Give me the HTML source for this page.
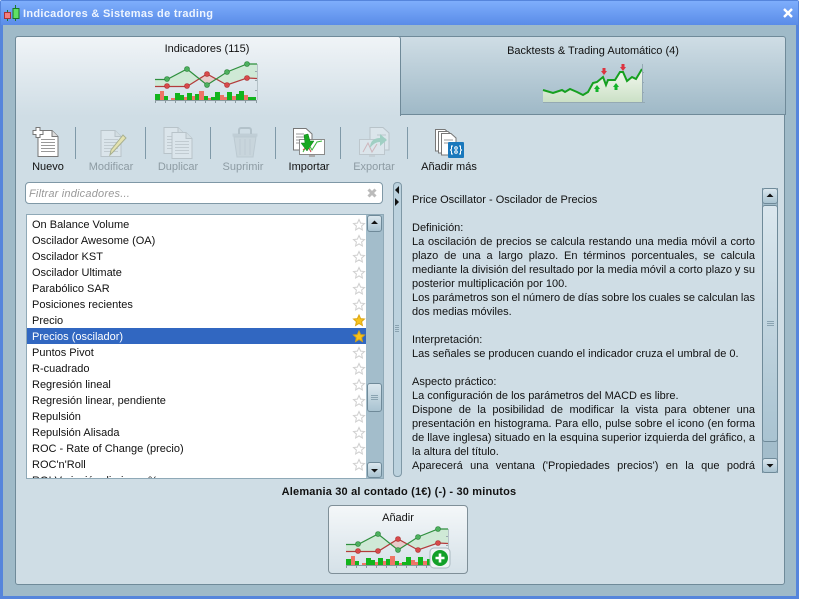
<!DOCTYPE html>
<html><head><meta charset="utf-8"><style>
html,body{margin:0;padding:0;width:819px;height:600px;overflow:hidden;background:#fff}
body{font-family:"Liberation Sans",sans-serif;font-size:11px;color:#111;position:relative}
.a{position:absolute}
.t{position:absolute;white-space:nowrap;line-height:14px;margin-top:1px}
.c{transform:translateX(-50%)}
.dis{color:#8d9ba3}
.sep{position:absolute;top:127px;width:1px;height:32px;background:#7f99a8}
.row{position:absolute;left:5px;width:320px;height:16px;line-height:16px;white-space:nowrap;color:#111;margin-top:1px}
.l{position:absolute;left:412px;width:343px;height:14px;line-height:14px;white-space:nowrap;color:#111;margin-top:1px}
.j{text-align:justify;text-align-last:justify;white-space:normal;word-spacing:-1.2px}
.sb{position:absolute;border:1px solid #6f8a99;border-radius:3px;box-sizing:border-box;background:linear-gradient(#dbe7ee,#a9c3d1)}
svg{position:absolute;overflow:visible}
</style></head><body>
<div class="a" style="left:0;top:0;width:799px;height:599px;background:#5585dc;border-radius:2px 2px 0 0"></div>
<div class="a" style="left:1px;top:1px;width:797px;height:24px;background:linear-gradient(#7eaefc,#5a8ce8)"></div>
<div class="a" style="left:3px;top:25px;width:793px;height:571px;background:#9fbac8"></div>
<div class="a" style="left:15px;top:36px;width:770px;height:549px;box-sizing:border-box;border:1px solid #6f8a99;border-radius:3px;background:#cfdde5"></div>
<div class="a" style="left:401px;top:36px;width:385px;height:79px;box-sizing:border-box;border:1px solid #6f8a99;border-left:none;border-radius:0 3px 0 0;background:linear-gradient(#cfdde5,#9fb9c7)"></div>
<div class="a" style="left:15px;top:36px;width:386px;height:80px;box-sizing:border-box;border:1px solid #6f8a99;border-bottom:none;border-radius:3px 3px 0 0;background:linear-gradient(#f0f4f7,#cfdde5)"></div>

<svg style="left:0;top:0" width="24" height="24">
<path d="M7.500 10v11M15.500 5v16" stroke="#1c7a2a"/><rect x="4.500" y="12.500" width="6" height="6" fill="#f47f7f" stroke="#a33"/><rect x="13" y="8.500" width="6" height="10" fill="#5fe065" stroke="#197a24"/>
</svg>
<div class="t" style="left:23px;top:6px;color:#eef5ff;font-weight:bold;font-size:11px;letter-spacing:.3px">Indicadores &amp; Sistemas de trading</div>
<svg style="left:781px;top:6px" width="14" height="14"><path d="M3 3l8 8M11 3l-8 8" stroke="#fff" stroke-width="2.400"/></svg>

<div class="t c" style="left:207px;top:41px">Indicadores (115)</div>
<div class="t c" style="left:593px;top:43px">Backtests &amp; Trading Automático (4)</div>

<svg style="left:0;top:0" width="819" height="600">
<defs>
<g id="chart">
<path d="M155 79.500H167L187 69L207 85L227 72L247 64H257V78.500H247L227 85L207 74L187 86H167L155 86.500Z" fill="#cfe9d6"/>
<path d="M198 78L207 74L216 79L207 85Z" fill="#e8cccc"/>
<path d="M257.500 64V100" stroke="#b5c2c8"/>
<path d="M257 71.500h-2M257 80.500h-2M257 90.500h-2" stroke="#9aa8ae"/>
<path d="M155 86.500H167H187L207 74L227 85L247 78L257 78.500" fill="none" stroke="#b33c3c" stroke-width="1.200"/>
<path d="M155 79.500H167L187 69L207 85L227 72L247 64H257" fill="none" stroke="#2f8f3e" stroke-width="1.200"/>
<g fill="#d8494a" stroke="#a33" stroke-width=".6"><circle cx="167" cy="86" r="2.500"/><circle cx="187" cy="86" r="2.500"/><circle cx="207" cy="74" r="2.500"/><circle cx="227" cy="85" r="2.500"/><circle cx="247" cy="78" r="2.500"/></g>
<g fill="#4cb05e" stroke="#2a8039" stroke-width=".6"><circle cx="167" cy="79" r="2.500"/><circle cx="187" cy="69" r="2.500"/><circle cx="207" cy="85" r="2.500"/><circle cx="227" cy="72" r="2.500"/><circle cx="247" cy="64" r="2.500"/></g>
<g fill="#12b41c"><rect x="155" y="94" width="5" height="6"/><rect x="164" y="96" width="4" height="4"/><rect x="175" y="93" width="5" height="7"/><rect x="180" y="95" width="4" height="5"/><rect x="187" y="93" width="5" height="7"/><rect x="195" y="94" width="4" height="6"/><rect x="204" y="96" width="4" height="4"/><rect x="211" y="97" width="4" height="3"/><rect x="215" y="92" width="5" height="8"/><rect x="227" y="92" width="5" height="8"/><rect x="236" y="94" width="4" height="6"/><rect x="239" y="91" width="5" height="9"/><rect x="248" y="97" width="8" height="3"/></g>
<g fill="#ef7466"><rect x="160" y="91" width="4" height="9"/><rect x="171" y="98" width="4" height="2"/><rect x="184" y="97" width="3" height="3"/><rect x="192" y="96" width="3" height="4"/><rect x="199" y="91" width="5" height="9"/><rect x="208" y="98" width="3" height="2"/><rect x="220" y="95" width="4" height="5"/><rect x="224" y="97" width="3" height="3"/><rect x="232" y="96" width="4" height="4"/><rect x="244" y="95" width="4" height="5"/></g>
<path d="M155 100.500H257M155.500 100v3M165.500 100v3M175.500 100v3M185.500 100v3M195.500 100v3M205.500 100v3M215.500 100v3M225.500 100v3M235.500 100v3M245.500 100v3M256.500 100v3" stroke="#8a9a9f" fill="none"/>
</g>
<linearGradient id="gf" x1="0" y1="0" x2="0" y2="1"><stop offset="0" stop-color="#f4f9f0"/><stop offset="1" stop-color="#cbe0c6"/></linearGradient>
<polygon id="star" points="0,-5.500 1.600,-1.900 5.500,-1.500 2.600,1.100 3.400,5 0,2.900 -3.400,5 -2.600,1.100 -5.500,-1.500 -1.600,-1.900"/>
<g id="doc"><path d="M0 0H14L20 6V26H0Z" fill="#fff" stroke="#777"/><path d="M14 0V6H20" fill="#ddd" stroke="#777"/><path d="M3 9H17M3 12H17M3 15H17M3 18H17M3 21H17" stroke="#999"/></g>
</defs>
<use href="#chart"/>
<path d="M543 90L553 93L562 90L565 92L570 89L577 92L583 95L588 92L593 83L597 82L603 77L606 85L608 80L615 80L620 72L623 72L627 81L632 77L636 79L642 69V102H543Z" fill="url(#gf)"/>
<path d="M543 90L553 93L562 90L565 92L570 89L577 92L583 95L588 92L593 83L597 82L603 77L606 85L608 80L615 80L620 72L623 72L627 81L632 77L636 79L642 69" fill="none" stroke="#16a020" stroke-width="2"/>
<path d="M642.500 64V102M642 72.500h2M642 82.500h2M642 92.500h2M543 102.500H645" stroke="#94a9b3" fill="none"/>
<path d="M602.500 68h3v3h1.500l-3 4l-3-4h1.500ZM621.500 64h3v3h1.500l-3 4l-3-4h1.500Z" fill="#dc3340"/>
<path d="M597 85l3 4h-1.500v3h-3v-3h-1.500ZM616 83l3 4h-1.500v3h-3v-3h-1.500Z" fill="#12b42a"/>

<!-- toolbar -->
<use href="#doc" x="38" y="130.500"/>
<path d="M36 127.500h4v3h3v4h-3v3h-4v-3h-3v-4h3Z" fill="#fff" stroke="#777"/>
<g opacity=".25"><use href="#doc" x="101" y="130.500"/></g>
<path d="M113 152l-3 3l1-5l12-15l3 3Z" fill="#e4e2b0" stroke="#a8b090"/>
<g opacity=".25"><use href="#doc" x="164" y="127.500"/><use href="#doc" x="172" y="132.500"/></g>
<g opacity=".5"><path d="M234 137l3 20h16l3-20Z" fill="#c3cfd5" stroke="#aab8c0"/><path d="M232.500 135h25" stroke="#b2c0c8" stroke-width="3"/><path d="M239 134v-4a2 2 0 012-2h8a2 2 0 012 2v4" fill="none" stroke="#98a8b1" stroke-width="2"/><path d="M240 139v16M245 139v16M250 139v16" stroke="#aebcc4"/></g>
<path d="M293.500 128.500H306L312 134V150H293.500Z" fill="#fff" stroke="#777"/><path d="M296 134H304M296 137H306M296 140H306M296 143H306" stroke="#999"/>
<rect x="299.500" y="139.500" width="25" height="15" fill="#fff" stroke="#8a8a8a"/><path d="M309 155h6v2h-6Z" fill="#aaa"/><path d="M303 152l5-9l4 7l5-8l5-1" fill="none" stroke="#38b338"/><path d="M303 150l5-4l3 6" fill="none" stroke="#c44"/>
<path d="M304 135l4-1l2 7h4l-7 10l-6-8h4Z" fill="#18a820" stroke="#0d7c15" stroke-width=".5"/>
<g opacity=".25"><path d="M370 127.500H383L389 133V150H370Z" fill="#fff" stroke="#777"/><path d="M377 135H386M377 139H386" stroke="#888"/><rect x="359.500" y="139.500" width="25" height="15" fill="#fff" stroke="#8a8a8a"/><path d="M369 155h6v2h-6Z" fill="#aaa"/><path d="M363 152l5-9l4 9l5-8" fill="none" stroke="#c44"/><path d="M370 148c0-7 4-10 10-10v-4l7 6l-7 6v-4c-4 0-7 2-10 6Z" fill="#18a860"/></g>
<path d="M435.500 129.500H445L450 134V151H435.500Z" fill="#fff" stroke="#777"/><path d="M438.500 131.500H448L453 136V153H438.500Z" fill="#fff" stroke="#777"/><path d="M441.500 133.500H451L456 138V155H441.500Z" fill="#fff" stroke="#777"/><path d="M444 140H453M444 143H453" stroke="#999"/>
<rect x="448" y="142" width="16" height="16" rx="1" fill="#1a78bc"/>
<path d="M453 146h-1.500v3l-1 1l1 1v3h1.500M459 146h1.500v3l1 1l-1 1v3h-1.500" fill="none" stroke="#fff"/><circle cx="456" cy="148" r="1.300" fill="none" stroke="#fff"/><circle cx="456" cy="152" r="1.300" fill="none" stroke="#fff"/>
</svg>

<div class="sep" style="left:75px"></div><div class="sep" style="left:145px"></div><div class="sep" style="left:210px"></div><div class="sep" style="left:275px"></div><div class="sep" style="left:340px"></div><div class="sep" style="left:407px"></div>
<div class="t c" style="left:48px;top:159px">Nuevo</div>
<div class="t c dis" style="left:111px;top:159px">Modificar</div>
<div class="t c dis" style="left:178px;top:159px">Duplicar</div>
<div class="t c dis" style="left:243px;top:159px">Suprimir</div>
<div class="t c" style="left:309px;top:159px">Importar</div>
<div class="t c dis" style="left:374px;top:159px">Exportar</div>
<div class="t c" style="left:449px;top:159px">Añadir más</div>

<!-- filter -->
<div class="a" style="left:25px;top:182px;width:358px;height:22px;box-sizing:border-box;border:1px solid #7f98a6;border-radius:4px;background:#fff"></div>
<div class="t" style="left:29px;top:186px;font-style:italic;color:#999;letter-spacing:.2px">Filtrar indicadores...</div>
<svg style="left:367px;top:188px" width="11" height="11"><path d="M1.500 1.500l7 7M8.500 1.500l-7 7" stroke="#bbb" stroke-width="3"/></svg>

<!-- list -->
<div class="a" style="left:26px;top:214px;width:358px;height:265px;box-sizing:border-box;border:1px solid #8fa9b7;background:#fff;overflow:hidden">
<div class="a" style="left:0;top:113px;width:339px;height:16px;background:#3167c1"></div>
<div class="row" style="top:1px">On Balance Volume</div>
<div class="row" style="top:17px">Oscilador Awesome (OA)</div>
<div class="row" style="top:33px">Oscilador KST</div>
<div class="row" style="top:49px">Oscilador Ultimate</div>
<div class="row" style="top:65px">Parabólico SAR</div>
<div class="row" style="top:81px">Posiciones recientes</div>
<div class="row" style="top:97px">Precio</div>
<div class="row" style="top:113px;color:#fff">Precios (oscilador)</div>
<div class="row" style="top:129px">Puntos Pivot</div>
<div class="row" style="top:145px">R-cuadrado</div>
<div class="row" style="top:161px">Regresión lineal</div>
<div class="row" style="top:177px">Regresión linear, pendiente</div>
<div class="row" style="top:193px">Repulsión</div>
<div class="row" style="top:209px">Repulsión Alisada</div>
<div class="row" style="top:225px">ROC - Rate of Change (precio)</div>
<div class="row" style="top:241px">ROC'n'Roll</div>
<div class="row" style="top:257px">ROI Variación diaria en %</div>
<div class="a" style="left:339px;top:0;width:17px;height:263px;background:#a3bdcb"></div>
</div>
<svg style="left:0;top:0" width="819" height="600">
<g fill="#fff" stroke="#cfcfcf"><use href="#star" x="359" y="225"/><use href="#star" x="359" y="241"/><use href="#star" x="359" y="257"/><use href="#star" x="359" y="273"/><use href="#star" x="359" y="289"/><use href="#star" x="359" y="305"/><use href="#star" x="359" y="353"/><use href="#star" x="359" y="369"/><use href="#star" x="359" y="385"/><use href="#star" x="359" y="401"/><use href="#star" x="359" y="417"/><use href="#star" x="359" y="433"/><use href="#star" x="359" y="449"/><use href="#star" x="359" y="465"/></g>
<g fill="#f8c31c" stroke="#dca612"><use href="#star" x="359" y="320.500"/><use href="#star" x="359" y="336.500"/></g>
</svg>
<div class="sb" style="left:367px;top:215px;width:15px;height:17px"></div>
<div class="sb" style="left:367px;top:383px;width:15px;height:29px"></div>
<div class="sb" style="left:367px;top:462px;width:15px;height:16px"></div>
<svg style="left:0;top:0" width="819" height="600">
<path d="M374.500 220.500l3.500 3.500h-7ZM374.500 472.500l3.500-3.500h-7Z" fill="#111"/>
<path d="M371 395.500h7M371 397.500h7M371 399.500h7" stroke="#8aa3b1"/>
</svg>

<!-- splitter -->
<div class="a" style="left:393px;top:182px;width:9px;height:295px;box-sizing:border-box;border:1px solid #7f98a6;border-radius:4px;background:#bcd2de"></div>
<svg style="left:0;top:0" width="819" height="600">
<path d="M399 186v8l-4-4ZM395 198v8l4-4Z" fill="#111"/>
<path d="M395 325.500h4M395 327.500h4M395 329.500h4M395 331.500h4" stroke="#8aa3b1"/>
</svg>

<!-- description -->
<div class="l" style="top:192px">Price Oscillator - Oscilador de Precios</div>
<div class="l" style="top:220px">Definición:</div>
<div class="l j" style="top:234px">La oscilación de precios se calcula restando una media móvil a corto</div>
<div class="l j" style="top:248px">plazo de una a largo plazo. En términos porcentuales, se calcula</div>
<div class="l j" style="top:262px">mediante la división del resultado por la media móvil a corto plazo y su</div>
<div class="l" style="top:276px">posterior multiplicación por 100.</div>
<div class="l j" style="top:290px">Los parámetros son el número de días sobre los cuales se calculan las</div>
<div class="l" style="top:304px">dos medias móviles.</div>
<div class="l" style="top:332px">Interpretación:</div>
<div class="l" style="top:346px">Las señales se producen cuando el indicador cruza el umbral de 0.</div>
<div class="l" style="top:374px">Aspecto práctico:</div>
<div class="l" style="top:388px">La configuración de los parámetros del MACD es libre.</div>
<div class="l j" style="top:402px">Dispone de la posibilidad de modificar la vista para obtener una</div>
<div class="l j" style="top:416px">presentación en histograma. Para ello, pulse sobre el icono (en forma</div>
<div class="l j" style="top:430px">de llave inglesa) situado en la esquina superior izquierda del gráfico, a</div>
<div class="l" style="top:444px">la altura del título.</div>
<div class="l j" style="top:458px">Aparecerá una ventana ('Propiedades precios') en la que podrá</div>

<div class="a" style="left:762px;top:188px;width:16px;height:285px;background:#a3bdcb;border-left:1px solid #7f98a6;border-right:1px solid #7f98a6;box-sizing:border-box"></div>
<div class="sb" style="left:762px;top:188px;width:16px;height:16px"></div>
<div class="sb" style="left:762px;top:205px;width:16px;height:237px"></div>
<div class="sb" style="left:762px;top:458px;width:16px;height:15px"></div>
<svg style="left:0;top:0" width="819" height="600">
<path d="M770 193.500l3.500 3.500h-7ZM770 467.500l3.500-3.500h-7Z" fill="#111"/>
<path d="M767 321.500h7M767 323.500h7M767 325.500h7" stroke="#8aa3b1"/>
</svg>

<div class="t c" style="left:399px;top:484px;font-weight:bold;letter-spacing:.18px">Alemania 30 al contado (1€) (-) - 30 minutos</div>

<div class="a" style="left:328px;top:505px;width:140px;height:69px;box-sizing:border-box;border:1px solid #7f8f98;border-radius:4px;background:linear-gradient(#f4f7f9,#d5e1e8)"></div>
<div class="t c" style="left:398px;top:510px">Añadir</div>
<svg style="left:0;top:0" width="819" height="600">
<use href="#chart" transform="translate(191,465)"/>
<rect x="430" y="548" width="20" height="20" rx="4" fill="#eef3f5" stroke="#a9b8c0"/>
<circle cx="440" cy="558" r="8" fill="#12a028"/>
<path d="M440 553.500v9M435.500 558h9" stroke="#fff" stroke-width="2.600"/>
</svg>
</body></html>
